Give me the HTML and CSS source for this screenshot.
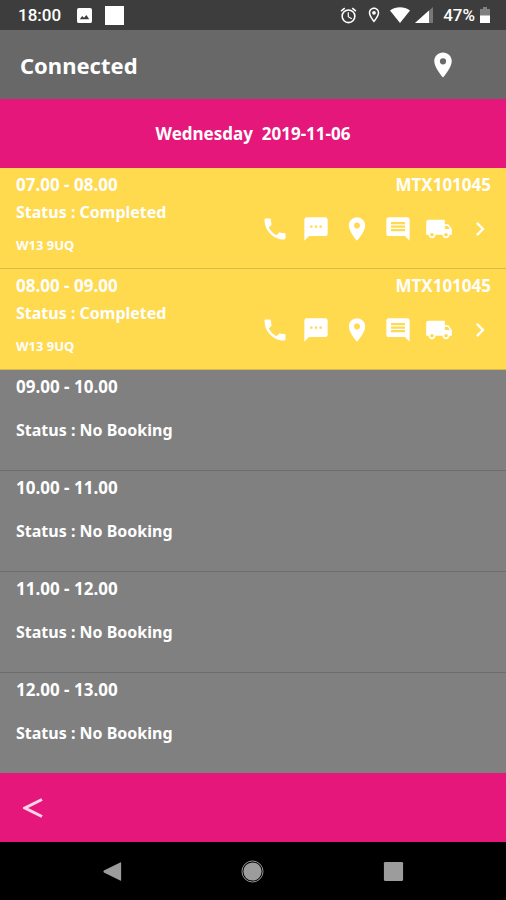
FILE: index.html
```html
<!DOCTYPE html>
<html lang="en">
<head>
    <meta charset="UTF-8">
    <meta name="viewport" content="width=device-width, initial-scale=1.0">
    <title>Bookings</title>
    <link rel="stylesheet" href="styles.css">
</head>
<body>
    <!-- icons used more than once -->
    <svg class="sprite" aria-hidden="true">
        <symbol id="phone" viewBox="0 0 24 24"><path d="M6.62 10.79c1.44 2.83 3.76 5.14 6.59 6.59l2.2-2.2c.27-.27.67-.36 1.02-.24 1.12.37 2.33.57 3.57.57.55 0 1 .45 1 1V20c0 .55-.45 1-1 1-9.39 0-17-7.61-17-17 0-.55.45-1 1-1h3.500c.55 0 1 .45 1 1 0 1.25.2 2.45.57 3.570.11.35.03.74-.25 1.020l-2.200 2.200z"/></symbol>
        <symbol id="sms" viewBox="0 0 24 24"><path d="M20 2H4c-1.100 0-1.990.9-1.990 2L2 22l4-4h14c1.100 0 2-.9 2-2V4c0-1.100-.9-2-2-2zM9 11H7V9h2v2zm4 0h-2V9h2v2zm4 0h-2V9h2v2z"/></symbol>
        <symbol id="pin" viewBox="0 0 24 24"><path d="M12 2C8.130 2 5 5.130 5 9c0 5.250 7 13 7 13s7-7.750 7-13c0-3.870-3.130-7-7-7zm0 9.500a2.500 2.500 0 0 1 0-5 2.500 2.500 0 0 1 0 5z"/></symbol>
        <symbol id="comment" viewBox="0 0 24 24"><path d="M21.990 4c0-1.100-.89-2-1.990-2H4c-1.100 0-2 .9-2 2v12c0 1.100.9 2 2 2h14l4 4-.01-18zM18 14H6v-2h12v2zm0-3H6V9h12v2zm0-3H6V6h12v2z"/></symbol>
        <symbol id="truck" viewBox="0 0 24 24"><path d="M20 8h-3V4H3c-1.100 0-2 .9-2 2v11h2c0 1.660 1.340 3 3 3s3-1.340 3-3h6c0 1.660 1.340 3 3 3s3-1.340 3-3h2v-5l-3-4zM6 18.500c-.83 0-1.500-.67-1.500-1.500s.67-1.500 1.500-1.500 1.500.67 1.500 1.500-.67 1.500-1.500 1.500zm13.500-9l1.960 2.500H17V9.500h2.500zm-1.500 9c-.83 0-1.500-.67-1.500-1.500s.67-1.500 1.500-1.500 1.500.67 1.500 1.500-.67 1.500-1.500 1.500z"/></symbol>
        <symbol id="next" viewBox="0 0 24 24"><path d="M10 6L8.590 7.410 13.170 12l-4.580 4.590L10 18l6-6z"/></symbol>
    </svg>

    <div class="statusbar">
        <span class="clock">18:00</span>
        <svg class="photo" viewBox="0 0 16 16"><path fill-rule="evenodd" d="M2 0h12a2 2 0 0 1 2 2v12a2 2 0 0 1-2 2H2a2 2 0 0 1-2-2V2a2 2 0 0 1 2-2zM3 12h10L10 7.500 7.500 10.500 5.500 8.500z"/></svg>
        <span class="square"></span>
        <div class="system">
            <svg class="alarm" viewBox="0 0 24 24"><path d="M22 5.720l-4.600-3.860-1.290 1.530 4.600 3.860L22 5.720zM7.880 3.390L6.600 1.860 2 5.710l1.290 1.530 4.590-3.850zM12.500 8H11v6l4.750 2.850.75-1.230-4-2.370V8zM12 4a9 9 0 1 0 0 18 9 9 0 0 0 0-18zm0 16a7 7 0 1 1 0-14 7 7 0 0 1 0 14z"/></svg>
            <svg class="place" viewBox="0 0 24 24"><path d="M12 2C8.130 2 5 5.130 5 9c0 5.250 7 13 7 13s7-7.750 7-13c0-3.870-3.130-7-7-7zM7 9c0-2.760 2.240-5 5-5s5 2.240 5 5c0 2.880-2.880 7.190-5 9.880C9.920 16.210 7 11.850 7 9z"/><circle cx="12" cy="9" r="2.500"/></svg>
            <svg class="wifi" viewBox="0 0 20 16"><path d="M0 3.500C6 -.8 14 -.8 20 3.500L10 16z"/></svg>
            <svg class="signal" viewBox="0 0 18 16"><path d="M0 16L18 0v16z" opacity=".3"/><path d="M0 16L14 3.500V16z"/></svg>
            <span class="percent">47%</span>
            <svg class="battery" viewBox="0 0 10 16"><path d="M3 0h4v2h3v7H0V2h3z" opacity=".35"/><path d="M0 8.500h10V16H0z"/></svg>
        </div>
    </div>

    <header>
        <h1>Connected</h1>
        <button class="locate" aria-label="Location"><svg><use href="#pin"/></svg></button>
    </header>

    <h2 class="date">Wednesday&nbsp; 2019-11-06</h2>

    <ul class="slots">
        <li class="slot done">
            <div class="info">
                <p class="time">07.00 - 08.00</p>
                <p class="status">Status : Completed</p>
                <p class="postcode">W13 9UQ</p>
            </div>
            <div class="job">
                <p class="ref">MTX101045</p>
                <div class="actions">
                    <button aria-label="Call"><svg><use href="#phone"/></svg></button>
                    <button aria-label="Text"><svg><use href="#sms"/></svg></button>
                    <button aria-label="Map"><svg><use href="#pin"/></svg></button>
                    <button aria-label="Notes"><svg><use href="#comment"/></svg></button>
                    <button aria-label="Delivery"><svg><use href="#truck"/></svg></button>
                    <button aria-label="Open"><svg><use href="#next"/></svg></button>
                </div>
            </div>
        </li>
        <li class="slot done">
            <div class="info">
                <p class="time">08.00 - 09.00</p>
                <p class="status">Status : Completed</p>
                <p class="postcode">W13 9UQ</p>
            </div>
            <div class="job">
                <p class="ref">MTX101045</p>
                <div class="actions">
                    <button aria-label="Call"><svg><use href="#phone"/></svg></button>
                    <button aria-label="Text"><svg><use href="#sms"/></svg></button>
                    <button aria-label="Map"><svg><use href="#pin"/></svg></button>
                    <button aria-label="Notes"><svg><use href="#comment"/></svg></button>
                    <button aria-label="Delivery"><svg><use href="#truck"/></svg></button>
                    <button aria-label="Open"><svg><use href="#next"/></svg></button>
                </div>
            </div>
        </li>
        <li class="slot">
            <div class="info">
                <p class="time">09.00 - 10.00</p>
                <p class="status">Status : No Booking</p>
            </div>
        </li>
        <li class="slot">
            <div class="info">
                <p class="time">10.00 - 11.00</p>
                <p class="status">Status : No Booking</p>
            </div>
        </li>
        <li class="slot">
            <div class="info">
                <p class="time">11.00 - 12.00</p>
                <p class="status">Status : No Booking</p>
            </div>
        </li>
        <li class="slot">
            <div class="info">
                <p class="time">12.00 - 13.00</p>
                <p class="status">Status : No Booking</p>
            </div>
        </li>
    </ul>

    <footer>
        <button class="prev" aria-label="Previous day"><svg viewBox="0 0 20 20"><path d="M19 1.500L2 10l17 8.500"/></svg></button>
    </footer>

    <nav>
        <button aria-label="Back"><svg viewBox="0 0 24 24"><path d="M21 3v18q0 1-1 .5L3 13q-1-1 0-2l17-8.500q1-.5 1 .5z"/></svg></button>
        <button aria-label="Home"><svg viewBox="0 0 24 24"><circle cx="12" cy="12" r="9.500"/><circle class="ring" cx="12" cy="12" r="11"/></svg></button>
        <button aria-label="Recent apps"><svg viewBox="0 0 24 24"><rect x="2" y="2" width="20" height="20" rx="1.500"/></svg></button>
    </nav>
</body>
</html>
```
FILE: styles.css
```css
*{
    box-sizing: border-box;
}
body{
    margin: 0;
    min-height: 100vh;
    display: flex;
    flex-direction: column;
    background-color: #000;
    color: #fff;
    font-family: "Noto Sans", "Open Sans", sans-serif;
    font-weight: bold;
}
h1, h2, p, ul{
    margin: 0;
    padding: 0;
}
button{
    display: flex;
    padding: 0;
    border: none;
    background: none;
    color: inherit;
    cursor: pointer;
}
svg{
    display: block;
    fill: currentColor;
}
.sprite{
    display: none;
}

/* phone status bar */
.statusbar{
    height: 30px;
    padding: 0 16px 0 18px;
    display: flex;
    align-items: center;
    background-color: #3d3d3d;
    font-family: Roboto, sans-serif;
    font-size: 17px;
    font-weight: 500;
}
.photo{
    width: 15px;
    height: 15px;
    margin-left: 16px;
}
.square{
    width: 19px;
    height: 19px;
    margin-left: 13px;
    background-color: #fff;
}
.system{
    margin-left: auto;
    display: flex;
    align-items: center;
}
.alarm{
    width: 19px;
    height: 19px;
    margin-right: 7px;
}
.place{
    width: 18px;
    height: 18px;
    margin-right: 7px;
}
.wifi{
    width: 20px;
    height: 16px;
    margin-right: 5px;
}
.signal{
    width: 18px;
    height: 16px;
    margin-right: 10px;
}
.percent{
    margin-right: 5px;
}
.battery{
    width: 10px;
    height: 16px;
}

header{
    height: 69px;
    padding: 0 48px 0 20px;
    display: flex;
    align-items: center;
    justify-content: space-between;
    background-color: #686868;
}
h1{
    font-size: 22px;
    line-height: 28px;
}
.locate svg{
    width: 30px;
    height: 30px;
}
.date{
    height: 69px;
    display: flex;
    align-items: center;
    justify-content: center;
    background-color: #e5177b;
    font-size: 17px;
}

/* booking slots */
.slots{
    list-style: none;
}
.slot{
    height: 101px;
    padding: 7px 12px 0 16px;
    display: flex;
    justify-content: space-between;
    background-color: #808080;
    border-bottom: 1px solid #6c6c6c;
    font-size: 17px;
    line-height: 20px;
}
.slot:last-child{
    height: 100px;
    border-bottom: none;
}
.status{
    margin-top: 23px;
    font-size: 16px;
}
.done{
    background-color: #ffd94e;
    border-bottom-color: #d9b94a;
}
.done .status{
    margin-top: 7px;
}
.postcode{
    margin-top: 13px;
    font-size: 13px;
}
.ref{
    padding-right: 3px;
    text-align: right;
}
.actions{
    margin-top: 20px;
    display: flex;
    gap: 13px;
}
.actions svg{
    width: 28px;
    height: 28px;
}

footer{
    height: 69px;
    padding: 0 23px;
    display: flex;
    align-items: center;
    background-color: #e5177b;
}
.prev svg{
    width: 20px;
    height: 20px;
    fill: none;
    stroke: #ffd3e8;
    stroke-width: 3;
}

/* phone buttons */
nav{
    height: 58px;
    padding: 0 42px;
    display: flex;
    align-items: center;
    justify-content: space-around;
    color: #9c9c9c;
}
nav svg{
    width: 23px;
    height: 23px;
}
.ring{
    fill: none;
    stroke: #9c9c9c;
}
```
